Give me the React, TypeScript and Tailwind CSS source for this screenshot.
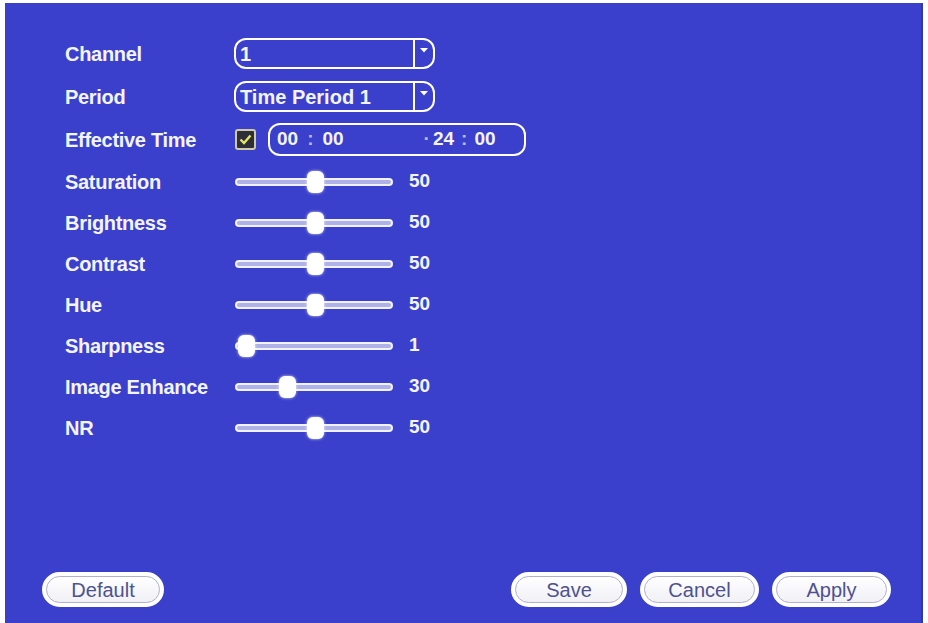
import { ReactNode } from "react"

type SliderRow = {
  label: string
  value: number
}

const sliders: SliderRow[] = [
  { label: "Saturation", value: 50 },
  { label: "Brightness", value: 50 },
  { label: "Contrast", value: 50 },
  { label: "Hue", value: 50 },
  { label: "Sharpness", value: 1 },
  { label: "Image Enhance", value: 30 },
  { label: "NR", value: 50 },
]

const font = { fontFamily: '"Liberation Sans", Arial, sans-serif' }

const Row = ({ label, height, children }: { label: string; height: string; children: ReactNode }) => (
  <div className={`flex items-center ${height}`}>
    <div className="w-[169px] shrink-0 text-[20px] font-bold tracking-[-0.3px] text-[#f4f4ff]">{label}</div>
    {children}
  </div>
)

const Select = ({ value }: { value: string }) => (
  <div className="flex h-[31px] w-[201px] items-stretch rounded-[12px] border-2 border-white">
    <div className="flex flex-1 items-center pl-[4px] text-[20px] font-bold text-[#f4f4ff]">{value}</div>
    <div className="flex w-[20px] items-start justify-center border-l-2 border-white pt-[8px]">
      <svg width="8" height="5" viewBox="0 0 8 5">
        <path d="M0 0h8L4 4.5z" fill="#fff" />
      </svg>
    </div>
  </div>
)

const Slider = ({ value }: { value: number }) => {
  const left = 2 + value * 1.4
  return (
    <div className="flex items-center">
      <div className="relative h-[22px] w-[158px]">
        <div className="absolute inset-x-0 top-[7px] h-[8px] rounded-full border-2 border-[#f2f2ff] bg-[#aeb2e6]" />
        <div
          className="absolute top-0 h-[22px] w-[17px] rounded-[6px] bg-white shadow-[0_0_3px_rgba(255,255,255,0.8)]"
          style={{ left }}
        />
      </div>
      <span className="ml-[16px] text-[19px] font-bold text-[#f4f4ff]">{value}</span>
    </div>
  )
}

const Button = ({ label, width }: { label: string; width: string }) => (
  <button
    className={`flex h-[35px] ${width} items-center justify-center rounded-full border-2 border-white bg-white p-[2px]`}
  >
    <span className="flex h-full w-full items-center justify-center rounded-full border border-[#b0b0c8] bg-gradient-to-b from-white to-[#f0f0f6] text-[20px] text-[#4e5290]">
      {label}
    </span>
  </button>
)

export default function App() {
  return (
    <div className="h-[623px] w-[928px] bg-white pl-[5px] pr-[5px] pt-[3px]" style={font}>
      <div className="flex h-[620px] flex-col border-r-2 border-[#3236a8] bg-[#3a40cc] pl-[60px] pt-[29px]">
        <Row label="Channel" height="h-[43px]">
          <Select value="1" />
        </Row>
        <Row label="Period" height="h-[43px]">
          <Select value="Time Period 1" />
        </Row>
        <Row label="Effective Time" height="h-[43px]">
          <div className="ml-[1px] flex h-[21px] w-[21px] items-center justify-center rounded-[3px] border-2 border-[#cfcaa8] bg-[#2e2e36]">
            <svg width="13" height="11" viewBox="0 0 13 11">
              <path d="M1.5 5.5l3.5 3.5L11.5 1.5" stroke="#e4e46a" strokeWidth="2.4" fill="none" />
            </svg>
          </div>
          <div className="ml-[12px] flex h-[33px] w-[258px] items-center rounded-[12px] border-2 border-white pl-[7px] text-[19px] font-bold text-[#f4f4ff]">
            <span>00</span>
            <span className="mx-[9px] text-[#b8bce8]">:</span>
            <span>00</span>
            <span className="ml-[80px] mr-[3px] text-[#b8bce8]">·</span>
            <span>24</span>
            <span className="mx-[7px] text-[#b8bce8]">:</span>
            <span>00</span>
          </div>
        </Row>
        {sliders.map((s) => (
          <Row key={s.label} label={s.label} height="h-[41px]">
            <div className="ml-[1px]">
              <Slider value={s.value} />
            </div>
          </Row>
        ))}
        <div className="mt-auto mb-[16px] -ml-[23px] flex items-center pr-[30px]">
          <Button label="Default" width="w-[122px]" />
          <div className="ml-auto flex gap-[13px]">
            <Button label="Save" width="w-[116px]" />
            <Button label="Cancel" width="w-[119px]" />
            <Button label="Apply" width="w-[119px]" />
          </div>
        </div>
      </div>
    </div>
  )
}
